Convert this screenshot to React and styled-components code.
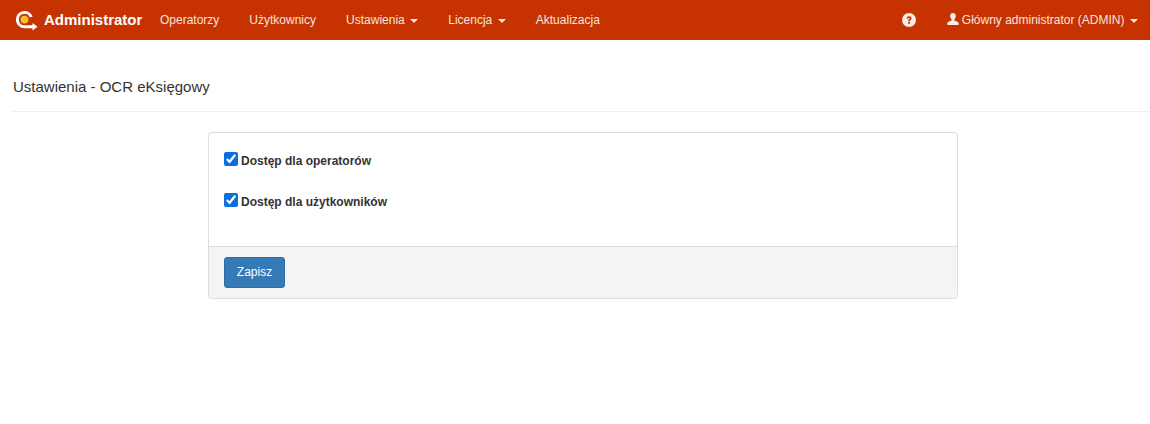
import React from "react";
import styled, { createGlobalStyle } from "styled-components";

const Global = createGlobalStyle`
  html, body { margin: 0; padding: 0; background: #fff; }
  body { font-family: "Liberation Sans", Arial, sans-serif; font-size: 12px; color: #333; }
`;

const Navbar = styled.nav`
  height: 40px;
  background: #c63300;
  display: flex;
  align-items: center;
  color: #fff;
`;
const Brand = styled.a`
  display: flex;
  align-items: center;
  gap: 6px;
  padding-left: 15px;
  width: 145px;
  box-sizing: border-box;
  color: #fff;
`;
const BrandName = styled.span`
  font-size: 15px;
  font-weight: 700;
  margin-bottom: 2px;
`;
const NavList = styled.div`
  display: flex;
  align-items: center;
  flex: 1;
`;
const NavItem = styled.a`
  display: flex;
  align-items: center;
  padding: 0 15px;
  line-height: 40px;
  font-size: 12px;
  color: #f5e3dc;
  white-space: nowrap;
`;
const Caret = styled.span`
  display: inline-block;
  width: 0;
  height: 0;
  margin-left: 5.5px;
  margin-top: 2px;
  border-top: 4px solid #f5e3dc;
  border-left: 4px solid transparent;
  border-right: 4px solid transparent;
`;
const RightNav = styled.div`
  display: flex;
  align-items: center;
  padding-right: 12px;
`;
const HelpItem = styled(NavItem)`
  margin-right: 16px;
`;
const UserItem = styled(NavItem)`
  padding: 0;
`;
const UserIcon = styled.svg`
  width: 12px;
  height: 12px;
  margin-right: 3px;
  margin-top: -2px;
`;
const Page = styled.main`
  padding: 0 0 0 13px;
`;
const Header = styled.h1`
  margin: 0;
  padding: 38px 0 15px;
  font-size: 15px;
  line-height: 18px;
  font-weight: 400;
  color: #333;
  border-bottom: 1px solid #eee;
`;
const Panel = styled.section`
  width: 750px;
  box-sizing: border-box;
  margin: 20px 0 0 195px;
  border: 1px solid #ddd;
  border-radius: 4px;
  box-shadow: 0 1px 1px rgba(0, 0, 0, 0.05);
  background: #fff;
`;
const PanelBody = styled.div`
  height: 113px;
  padding: 19px 15px 15px;
  box-sizing: border-box;
  display: flex;
  flex-direction: column;
  gap: 23px;
`;
const CheckRow = styled.label`
  display: flex;
  align-items: center;
  height: 18px;
  font-weight: 700;
  font-size: 12px;
  color: #333;
`;
const Check = styled.input`
  width: 14px;
  height: 14px;
  margin: -4px 3px 0 0;
  accent-color: #0b6fe0;
`;
const PanelFooter = styled.div`
  height: 52px;
  box-sizing: border-box;
  padding: 10px 15px;
  background: #f4f4f4;
  border-top: 1px solid #ddd;
  border-radius: 0 0 3px 3px;
`;
const SaveButton = styled.button`
  display: block;
  width: 61px;
  height: 31px;
  padding: 0 0 2px;
  font: 12px "Liberation Sans", Arial, sans-serif;
  color: #fff;
  background: #337ab7;
  border: 1px solid #2e6da4;
  border-radius: 3px;
`;

const Logo = () => (
  <svg width="23" height="24" viewBox="0 0 23 24" fill="none">
    <path d="M16.3 9.1 A7.2 7.2 0 1 0 9.5 18.8 H19" stroke="#fff" strokeWidth="3" />
    <path d="M17.5 15 L22.5 18.8 L17.5 22.6 Z" fill="#fff" />
    <circle cx="9.5" cy="11.6" r="3.9" fill="#f5c02c" />
  </svg>
);

const Help = () => (
  <svg width="14" height="14" viewBox="0 0 14 14">
    <circle cx="7" cy="7" r="7" fill="#f8ece7" />
    <path d="M4.6 5.4 C4.8 3.8 6 3.2 7.2 3.2 C8.6 3.2 9.6 4 9.6 5.2 C9.6 6.8 7.8 6.8 7.8 8.2 H6.1 C6.1 6.2 7.7 6.2 7.7 5.3 C7.7 4.9 7.4 4.7 7 4.7 C6.5 4.7 6.2 5 6.1 5.7 Z" fill="#c63300" />
    <rect x="6.1" y="9" width="1.8" height="1.8" fill="#c63300" />
  </svg>
);

export default function App() {
  return (
    <>
      <Global />
      <Navbar>
        <Brand><Logo /><BrandName>Administrator</BrandName></Brand>
        <NavList>
          <NavItem>Operatorzy</NavItem>
          <NavItem>Użytkownicy</NavItem>
          <NavItem>Ustawienia<Caret /></NavItem>
          <NavItem>Licencja<Caret /></NavItem>
          <NavItem>Aktualizacja</NavItem>
        </NavList>
        <RightNav>
          <HelpItem><Help /></HelpItem>
          <UserItem>
            <UserIcon viewBox="0 0 12 12">
              <path d="M6 0 C4.2 0 3.2 1.3 3.2 3 C3.2 4.6 4 5.8 4.6 6.4 V7.4 C3.2 8 0.6 8.4 0.4 10 V12 H11.6 V10 C11.4 8.4 8.8 8 7.4 7.4 V6.4 C8 5.8 8.8 4.6 8.8 3 C8.8 1.3 7.8 0 6 0 Z" fill="#f8ece7" />
            </UserIcon>
            Główny administrator (ADMIN)<Caret />
          </UserItem>
        </RightNav>
      </Navbar>
      <Page>
        <Header>Ustawienia - OCR eKsięgowy</Header>
        <Panel>
          <PanelBody>
            <CheckRow><Check type="checkbox" defaultChecked />Dostęp dla operatorów</CheckRow>
            <CheckRow><Check type="checkbox" defaultChecked />Dostęp dla użytkowników</CheckRow>
          </PanelBody>
          <PanelFooter><SaveButton>Zapisz</SaveButton></PanelFooter>
        </Panel>
      </Page>
    </>
  );
}
